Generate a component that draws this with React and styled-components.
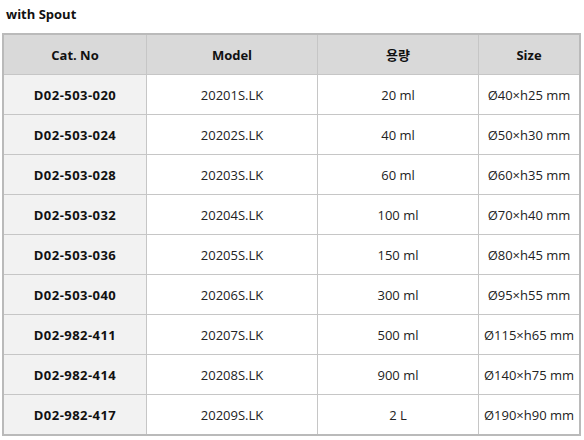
import React from "react";
import styled, { createGlobalStyle } from "styled-components";

const Global = createGlobalStyle`
  html, body { margin: 0; padding: 0; background: #fff; }
  body { font-family: "Open Sans", "Noto Sans CJK KR", sans-serif; color: #222; }
`;

const Page = styled.div`
  width: 584px;
  height: 440px;
  overflow: hidden;
`;

const Title = styled.h3`
  margin: 0;
  height: 33px;
  padding: 4px 0 0 6px;
  box-sizing: border-box;
  font-size: 13px;
  line-height: 20px;
  font-weight: 700;
  color: #111;
`;

const Table = styled.table`
  margin-left: 2px;
  border: 2px solid #bababa;
  border-collapse: separate;
  border-spacing: 0;
  table-layout: fixed;
  width: 579px;
  font-size: 13px;
`;

const Cell = styled.td`
  height: 39px;
  padding: 0;
  box-sizing: content-box;
  text-align: center;
  vertical-align: middle;
  border-right: ${(p) => (p.$last ? "none" : "1px solid #c6c6c6")};
  border-bottom: ${(p) => (p.$bottom ? "none" : "1px solid #c6c6c6")};
  background: ${(p) => (p.$head ? "#d9d9d9" : p.$key ? "#f2f2f2" : "#fff")};
  font-weight: ${(p) => (p.$head || p.$key ? 700 : 400)};
  letter-spacing: ${(p) => (p.$key ? "0.45px" : "0")};
  color: ${(p) => (p.$head || p.$key ? "#111" : "#222")};
  white-space: nowrap;
`;

const rows = [
  ["D02-503-020", "20201S.LK", "20 ml", "Ø40×h25 mm"],
  ["D02-503-024", "20202S.LK", "40 ml", "Ø50×h30 mm"],
  ["D02-503-028", "20203S.LK", "60 ml", "Ø60×h35 mm"],
  ["D02-503-032", "20204S.LK", "100 ml", "Ø70×h40 mm"],
  ["D02-503-036", "20205S.LK", "150 ml", "Ø80×h45 mm"],
  ["D02-503-040", "20206S.LK", "300 ml", "Ø95×h55 mm"],
  ["D02-982-411", "20207S.LK", "500 ml", "Ø115×h65 mm"],
  ["D02-982-414", "20208S.LK", "900 ml", "Ø140×h75 mm"],
  ["D02-982-417", "20209S.LK", "2 L", "Ø190×h90 mm"],
];

const widths = [143, 171, 161, 100];
const heads = ["Cat. No", "Model", "용량", "Size"];

export default function App() {
  return (
    <Page>
      <Global />
      <Title>with Spout</Title>
      <Table>
        <colgroup>
          {widths.map((w, i) => (
            <col key={i} style={{ width: w }} />
          ))}
        </colgroup>
        <thead>
          <tr>
            {heads.map((h, i) => (
              <Cell as="th" key={h} $head $last={i === 3}>
                {h}
              </Cell>
            ))}
          </tr>
        </thead>
        <tbody>
          {rows.map((r, ri) => (
            <tr key={r[0]}>
              {r.map((c, ci) => (
                <Cell
                  key={ci}
                  $key={ci === 0}
                  $last={ci === 3}
                  $bottom={ri === rows.length - 1}
                >
                  {c}
                </Cell>
              ))}
            </tr>
          ))}
        </tbody>
      </Table>
    </Page>
  );
}
